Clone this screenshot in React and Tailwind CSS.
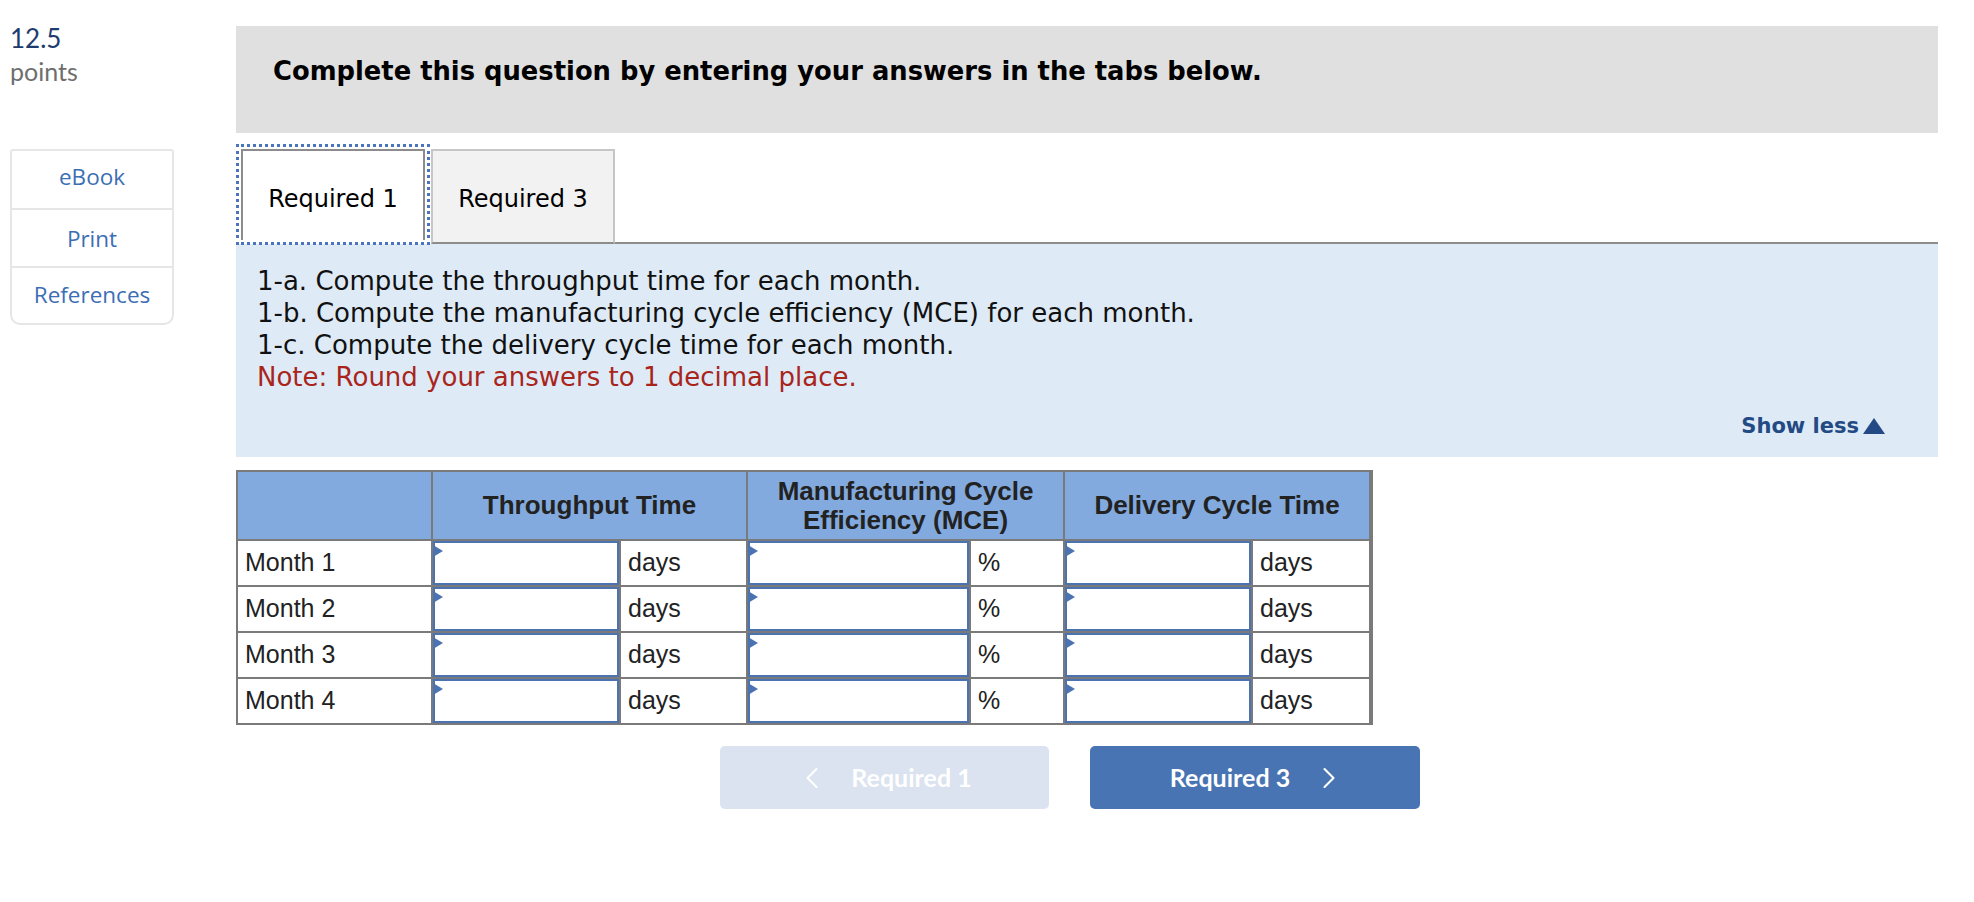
import React from "react";
import { ChevronLeft, ChevronRight } from "lucide-react";

function InputCell() {
  return (
    <div className="relative bg-white border-2 border-[#4b73b1]">
      <div className="absolute left-[-2px] top-[2px] w-0 h-0 border-y-[6px] border-y-transparent border-l-[10px] border-l-[#4b73b1]" />
    </div>
  );
}

function Unit({ children }) {
  return (
    <div className="bg-white flex items-center pl-[7px] text-[25px] text-[#222]">{children}</div>
  );
}

export default function App() {
  const months = ["Month 1", "Month 2", "Month 3", "Month 4"];
  return (
    <div className="w-[1974px] min-h-[902px] bg-white flex pl-[10px] pr-[36px]">
      {/* left column */}
      <div className="w-[164px] shrink-0 font-['Lato',sans-serif]">
        <div className="pt-[23px] text-[26px] leading-[30px] text-[#1d3b70]">12.5</div>
        <div className="mt-[4px] text-[25px] leading-[28px] text-[#6e6e6e]">points</div>
        <div className="mt-[64px] border-2 border-[#e6e6e6] rounded-t-[3px] rounded-b-[10px] text-[#3c6eb4] text-[22.5px] font-['Open_Sans',sans-serif]">
          <div className="h-[57px] pb-[5px] flex items-center justify-center">eBook</div>
          <div className="h-[58px] pt-[2px] border-t-2 border-[#e6e6e6] flex items-center justify-center">Print</div>
          <div className="h-[57px] pb-[2px] border-t-2 border-[#e6e6e6] flex items-center justify-center">References</div>
        </div>
      </div>

      {/* main column */}
      <div className="ml-[62px] flex-1 pt-[26px]">
        <div className="h-[107px] bg-[#e0e0e0] pl-[37px] pt-[30px] font-['DejaVu_Sans',sans-serif] font-bold text-[25.8px] leading-[30px] text-black">
          Complete this question by entering your answers in the tabs below.
        </div>

        <div className="mt-[16px] flex items-start h-[95px] font-['DejaVu_Sans',sans-serif] text-[24px] text-black">
          <div className="ml-[5px] w-[184px] h-[91px] pt-[6px] border-2 border-b-0 border-[#8c8c8c] bg-white outline-dotted outline-[3px] outline-[#4a74bb] outline-offset-[2px] flex items-center justify-center">
            Required 1
          </div>
          <div className="ml-[6px] w-[184px] h-[95px] pt-[5px] border-2 border-[#c6c6c6] border-b-[#8c8c8c] bg-[#f2f2f2] flex items-center justify-center">
            Required 3
          </div>
          <div className="flex-1 h-[95px] border-b-2 border-[#8c8c8c]" />
        </div>

        <div className="h-[213px] bg-[#deebf7] pt-[21px] pl-[21px] pr-[52px] font-['DejaVu_Sans',sans-serif] text-[26px] leading-[32px]">
          <div className="text-[#111]">1-a. Compute the throughput time for each month.</div>
          <div className="text-[#111]">1-b. Compute the manufacturing cycle efficiency (MCE) for each month.</div>
          <div className="text-[#111]">1-c. Compute the delivery cycle time for each month.</div>
          <div className="text-[#a9251b]">Note: Round your answers to 1 decimal place.</div>
          <div className="mt-[18px] flex justify-end items-center text-[21px] leading-[30px] font-bold text-[#234a84]">
            <span>Show less</span>
            <svg width="24" height="18" viewBox="0 0 24 18" className="ml-[3px]">
              <polygon points="12,1 23,17 1,17" fill="#234a84" />
            </svg>
          </div>
        </div>

        <div className="mt-[13px] w-[1137px] border-2 border-[#7a7a7a] bg-[#7a7a7a] grid grid-cols-[193px_186px_125px_221px_92px_186px_116px] grid-rows-[67px_44px_44px_44px_44px] gap-[2px] font-['Liberation_Sans',Arial,sans-serif] text-[#222]">
          <div className="bg-[#82aade]" />
          <div className="col-span-2 bg-[#82aade] flex items-center justify-center font-bold text-[26px]">Throughput Time</div>
          <div className="col-span-2 bg-[#82aade] flex items-center justify-center text-center font-bold text-[26px] leading-[29px]">
            Manufacturing Cycle<br />Efficiency (MCE)
          </div>
          <div className="col-span-2 bg-[#82aade] flex items-center justify-center font-bold text-[26px]">Delivery Cycle Time</div>
          {months.map((m) => (
            <React.Fragment key={m}>
              <div className="bg-white flex items-center pl-[7px] text-[25px]">{m}</div>
              <InputCell />
              <Unit>days</Unit>
              <InputCell />
              <Unit>%</Unit>
              <InputCell />
              <Unit>days</Unit>
            </React.Fragment>
          ))}
        </div>

        <div className="mt-[21px] ml-[484px] flex gap-[41px] font-['Lato',sans-serif] font-bold text-[25px] text-white">
          <div className="w-[329px] h-[63px] pl-[10px] rounded-[5px] bg-[#dae3ef] flex items-center justify-center gap-[34px]">
            <ChevronLeft size={36} strokeWidth={1.4} className="-mx-[13px]" />
            <span>Required 1</span>
          </div>
          <div className="w-[330px] h-[63px] pr-[6px] rounded-[5px] bg-[#4874b3] flex items-center justify-center gap-[34px]">
            <span>Required 3</span>
            <ChevronRight size={36} strokeWidth={1.4} className="-mx-[13px]" />
          </div>
        </div>
      </div>
    </div>
  );
}
